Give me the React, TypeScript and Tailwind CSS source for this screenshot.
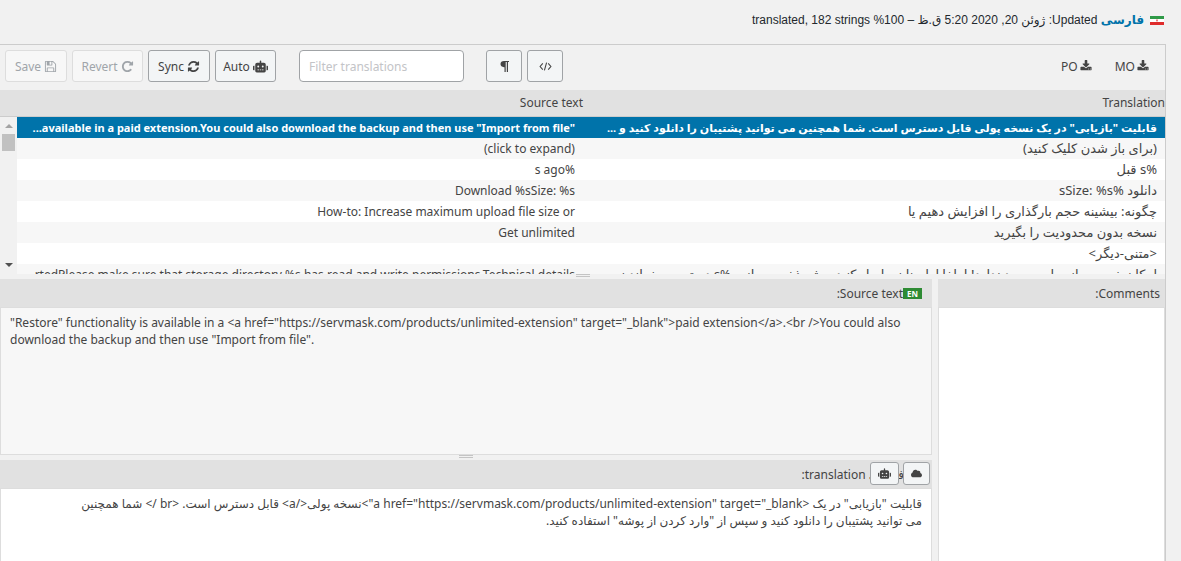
import React from "react";
import { FaCloud, FaRobot } from "react-icons/fa";

interface IconProps {
  d: string;
  className?: string;
}

const icons = {
  save: "M512 1536h768v-384h-768v384zm896 0h128v-896q0-14-10-38.5t-20-34.5l-281-281q-10-10-34-20t-39-10v416q0 40-28 68t-68 28h-576q-40 0-68-28t-28-68v-416h-128v1280h128v-416q0-40 28-68t68-28h832q40 0 68 28t28 68v416zm-384-928v-320q0-13-9.5-22.5t-22.5-9.5h-192q-13 0-22.5 9.5t-9.5 22.5v320q0 13 9.5 22.5t22.5 9.5h192q13 0 22.5-9.5t9.5-22.5zm640 32v928q0 40-28 68t-68 28h-1344q-40 0-68-28t-28-68v-1344q0-40 28-68t68-28h928q40 0 88 20t76 48l280 280q28 28 48 76t20 88z",
  revert:
    "M1664 256v448q0 26-19 45t-45 19h-448q-42 0-59-40-17-39 14-69l138-138q-148-137-349-137-104 0-198.5 40.5t-163.5 109.5-109.5 163.5-40.5 198.5 40.5 198.5 109.5 163.5 163.5 109.5 198.5 40.5q119 0 225-52t179-147q7-10 23-12 15 0 25 9l137 138q9 8 9.5 20.5t-7.5 22.5q-109 132-264 204.5t-327 72.5q-156 0-298-61t-245-164-164-245-61-298 61-298 164-245 245-164 298-61q147 0 284.5 55.5t244.5 156.5l130-129q29-31 70-14 39 17 39 59z",
  sync: "M1639 1056q0 5-1 7-64 268-268 434.5t-478 166.5q-146 0-282.5-55t-243.5-157l-129 129q-19 19-45 19t-45-19-19-45v-448q0-26 19-45t45-19h448q26 0 45 19t19 45-19 45l-137 137q71 66 161 102t187 36q134 0 250-65t186-179q11-17 53-117 8-23 30-23h192q13 0 22.5 9.5t9.5 22.5zm25-800v448q0 26-19 45t-45 19h-448q-26 0-45-19t-19-45 19-45l138-138q-148-137-349-137-134 0-250 65t-186 179q-11 17-53 117-8 23-30 23h-199q-13 0-22.5-9.5t-9.5-22.5v-7q65-268 270-434.5t480-166.5q146 0 284 55.5t245 156.5l130-129q19-19 45-19t45 19 19 45z",
  download:
    "M1344 1344q0-26-19-45t-45-19-45 19-19 45 19 45 45 19 45-19 19-45zm256 0q0-26-19-45t-45-19-45 19-19 45 19 45 45 19 45-19 19-45zm128-224v320q0 40-28 68t-68 28h-1472q-40 0-68-28t-28-68v-320q0-40 28-68t68-28h465l135 136q58 56 136 56t136-56l136-136h464q40 0 68 28t28 68zm-325-569q17 41-14 70l-448 448q-18 19-45 19t-45-19l-448-448q-31-29-14-70 17-39 59-39h256v-448q0-26 19-45t45-19h256q26 0 45 19t19 45v448h256q42 0 59 39z",
};

const Icon: React.FC<IconProps> = ({ d, className = "size-[13px]" }) => (
  <svg viewBox="0 0 1792 1792" fill="currentColor" className={className} aria-hidden="true">
    <path d={d} />
  </svg>
);

const rows = [
  {
    source: '...available in a paid extension.You could also download the backup and then use "Import from file"',
    dir: "ltr",
    translation: 'قابلیت "بازیابی" در یک نسخه پولی قابل دسترس است. شما همچنین می توانید پشتیبان را دانلود کنید و ...',
  },
  { source: "(click to expand)", dir: "rtl", translation: "(برای باز شدن کلیک کنید)" },
  { source: "%s ago", dir: "rtl", translation: "%s قبل" },
  { source: "Download %sSize: %s", dir: "rtl", translation: "دانلود %sSize: %s" },
  {
    source: "How-to: Increase maximum upload file size or",
    dir: "rtl",
    translation: "چگونه: بیشینه حجم بارگذاری را افزایش دهیم یا",
  },
  { source: "Get unlimited", dir: "rtl", translation: "نسخه بدون محدودیت را بگیرید" },
  { source: "", dir: "rtl", translation: "<متنی-دیگر>" },
  {
    source: "rtedPlease make sure that storage directory %s has read and write permissions.Technical details",
    dir: "ltr",
    translation: "امکان خروجی از سایت وجود ندارد! لطفا اطمینان حاصل کنید پوشه ذخیره سازی %s دسترسی خواندن",
  },
];

const button =
  "flex h-8 items-center justify-center gap-[3px] rounded-[3px] border border-[#a0a3a6] bg-[#f3f5f6] text-[#444]";
const disabledButton =
  "flex h-8 items-center justify-center gap-[3px] rounded-[3px] border border-[#dddddd] bg-[#f7f7f7] text-[#a0a5aa]";

const Flag: React.FC = () => (
  <svg viewBox="0 0 14 9" className="h-[9px] w-[14px]" role="img" aria-label="Iran">
    <rect width="14" height="3" fill="#2f9a48" />
    <rect y="3" width="14" height="3" fill="#ffffff" />
    <rect y="6" width="14" height="3" fill="#df2c2c" />
    <path d="M6 3.5h2v1.5l-1 .8-1-.8z" fill="#e88080" />
  </svg>
);

const Handle: React.FC = () => (
  <span className="flex h-[3px] w-[14px] flex-col justify-between">
    <span className="h-px bg-[#c4c4c4]" />
    <span className="h-px bg-[#c4c4c4]" />
  </span>
);

const Toolbar: React.FC = () => (
  <div dir="ltr" className="flex items-center gap-[5px] pt-[5px] pr-4 pb-2 pl-[5px]">
    <button type="button" disabled className={`${disabledButton} w-[62px]`}>
      Save <Icon d={icons.save} />
    </button>
    <button type="button" disabled className={`${disabledButton} w-[71px]`}>
      Revert <Icon d={icons.revert} />
    </button>
    <button type="button" className={`${button} w-[62px]`}>
      Sync <Icon d={icons.sync} />
    </button>
    <button type="button" className={`${button} w-[61px]`}>
      Auto <FaRobot className="size-[15px]" />
    </button>
    <input
      type="text"
      aria-label="Filter translations"
      placeholder="Filter translations"
      className="mr-[17px] ml-[18px] h-8 w-[165px] rounded-[4px] border border-[#a0a3a6] bg-white px-[9px] placeholder:text-[#c3c4c7]"
    />
    <button type="button" aria-label="Toggle invisibles" className={`${button} w-9`}>
      <svg viewBox="0 0 9 12" className="h-3 w-[9px]" fill="currentColor">
        <path d="M9 1v1H8v10H6.800V2H5.700v10H4.500V7.200H4C1.800 7.200.5 5.900.5 4.100S1.800 1 4 1z" />
      </svg>
    </button>
    <button type="button" aria-label="Toggle code view" className={`${button} w-9`}>
      <svg viewBox="0 0 14 10" className="h-[9px] w-[13px]" fill="none" stroke="currentColor" strokeWidth="1.2">
        <path d="M4 1.500 1 5l3 3.500M10 1.500 13 5l-3 3.500M8.200.8 5.800 9.200" />
      </svg>
    </button>
    <div className="ml-auto flex gap-[23px]">
      <a href="#po" className="flex items-center gap-[2px]">
        PO <Icon d={icons.download} className="size-3" />
      </a>
      <a href="#mo" className="flex items-center gap-[2px]">
        MO <Icon d={icons.download} className="size-3" />
      </a>
    </div>
  </div>
);

const StringList: React.FC = () => (
  <div className="flex h-[184px] overflow-hidden">
    <div className="min-w-0 flex-1">
      <table className="w-full table-fixed border-separate border-spacing-0">
        <thead className="bg-[#e1e1e1]">
          <tr className="h-[27px]">
            <th scope="col" className="w-[50.7%] border-b border-[#cccccc] p-0 pb-[2px] text-start font-normal">
              Translation
            </th>
            <th scope="col" className="border-b border-[#cccccc] p-0 pb-[2px] text-start font-normal">
              Source text
            </th>
          </tr>
        </thead>
        <tbody>
          {rows.map((row, i) => (
            <tr
              key={i}
              className={`h-[21px] ${
                i === 0
                  ? "bg-[#0073aa] text-[11px] font-bold text-white"
                  : i % 2
                    ? "bg-[#f7f7f7] text-[12px]"
                    : "bg-white text-[12px]"
              }`}
            >
              <td className={`overflow-hidden px-2 py-0 whitespace-nowrap ${i === 0 ? "" : "text-[13px]"}`}>
                {row.translation}
              </td>
              <td dir={row.dir} className="overflow-hidden py-0 pr-2 text-right whitespace-nowrap">
                {row.source}
              </td>
            </tr>
          ))}
        </tbody>
      </table>
    </div>
    <div className="flex w-[17px] flex-col">
      <div className="h-[27px] border-b border-[#cccccc] bg-[#e1e1e1]" />
      <div className="flex flex-1 flex-col items-center bg-[#f1f1f1] py-[7px]">
        <svg viewBox="0 0 8 4" className="h-1 w-2" fill="#a3a3a3">
          <path d="M0 4 4 0l4 4z" />
        </svg>
        <div className="mt-[6px] h-[17px] w-[13px] bg-[#c1c1c1]" />
        <svg viewBox="0 0 8 4" className="mt-auto h-1 w-2" fill="#505050">
          <path d="M0 0h8L4 4z" />
        </svg>
      </div>
    </div>
  </div>
);

const App: React.FC = () => {
  return (
    <div
      dir="rtl"
      className="flex h-screen flex-col overflow-hidden bg-[#f1f1f1] pr-[15px] font-['Noto_Sans','DejaVu_Sans',sans-serif] text-[12px] leading-[17px] text-[#444]"
    >
      <header className="flex h-11 items-center gap-1 pb-1 font-['Liberation_Sans','DejaVu_Sans',sans-serif] text-[12px] text-[#23282d]">
        <span className="mr-[2px] ml-[2px]">
          <Flag />
        </span>
        <p>
          <a href="#fa" className="font-bold text-[#0073aa]">
            فارسی
          </a>{" "}
          Updated: ژوئن 20, 2020 5:20 ق.ظ – 100% translated, 182 strings
        </p>
      </header>

      <main className="flex min-h-0 flex-1 flex-col border-t border-r border-[#cccccc]">
        <Toolbar />
        <StringList />
        <div className="flex h-[5px] justify-center">
          <Handle />
        </div>

        <div className="flex min-h-0 flex-1 gap-[6px]">
          <section className="flex w-[227px] flex-col">
            <label htmlFor="comments" className="flex h-7 items-center bg-[#e1e1e1] px-[5px]">
              Comments:
            </label>
            <textarea id="comments" className="flex-1 resize-none border border-b-0 border-[#dddddd] bg-white p-[9px]" />
          </section>

          <section className="flex min-w-0 flex-1 flex-col">
            <div className="flex h-7 items-center bg-[#e1e1e1] px-[10px]">
              <span className="flex h-[11px] items-center bg-[#2e8b34] px-1 text-[8px] leading-[11px] font-bold text-white">
                EN
              </span>
              <label htmlFor="source">Source text:</label>
            </div>
            <textarea
              id="source"
              dir="ltr"
              readOnly
              className="h-[148px] resize-none border border-[#dddddd] bg-[#f7f7f7] px-[9px] py-[6px]"
              defaultValue={
                '"Restore" functionality is available in a <a href="https://servmask.com/products/unlimited-extension" target="_blank">paid extension</a>.<br />You could also download the backup and then use "Import from file".'
              }
            />
            <div className="flex h-[5px] justify-center">
              <Handle />
            </div>
            <div className="relative flex h-7 items-center bg-[#e1e1e1] px-7">
              <label htmlFor="translation">فارسی translation:</label>
              <div className="absolute top-[2px] right-[2px] flex gap-1">
                <button
                  type="button"
                  aria-label="Suggest"
                  className="flex h-[23px] w-[27px] items-center justify-center rounded-[3px] border border-[#a0a3a6] bg-[#f3f5f6]"
                >
                  <FaCloud className="size-[11px]" />
                </button>
                <button
                  type="button"
                  aria-label="Auto translate"
                  className="flex h-[23px] w-[29px] items-center justify-center rounded-[3px] border border-[#a0a3a6] bg-[#f3f5f6]"
                >
                  <FaRobot className="size-[13px]" />
                </button>
              </div>
            </div>
            <textarea
              id="translation"
              className="min-h-0 flex-1 resize-none border border-b-0 border-[#dddddd] bg-white py-[6px] pr-[9px] pl-[68px]"
              defaultValue={
                'قابلیت "بازیابی" در یک <a href="https://servmask.com/products/unlimited-extension" target="_blank">نسخه پولی</a> قابل دسترس است. <br /> شما همچنین می توانید پشتیبان را دانلود کنید و سپس از "وارد کردن از پوشه" استفاده کنید.'
              }
            />
          </section>
        </div>
      </main>
    </div>
  );
};

export default App;
